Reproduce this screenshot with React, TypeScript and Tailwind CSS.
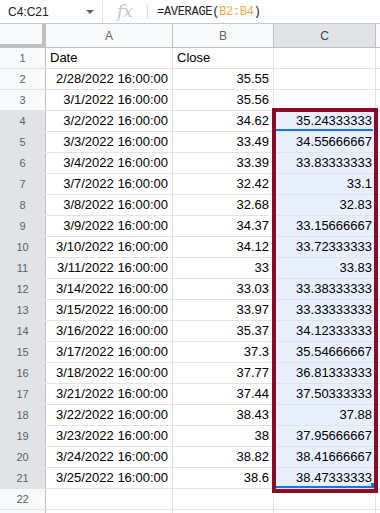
const rows: [string, string, string][] = [
  ['Date', 'Close', ''],
  ['2/28/2022 16:00:00', '35.55', ''],
  ['3/1/2022 16:00:00', '35.56', ''],
  ['3/2/2022 16:00:00', '34.62', '35.24333333'],
  ['3/3/2022 16:00:00', '33.49', '34.55666667'],
  ['3/4/2022 16:00:00', '33.39', '33.83333333'],
  ['3/7/2022 16:00:00', '32.42', '33.1'],
  ['3/8/2022 16:00:00', '32.68', '32.83'],
  ['3/9/2022 16:00:00', '34.37', '33.15666667'],
  ['3/10/2022 16:00:00', '34.12', '33.72333333'],
  ['3/11/2022 16:00:00', '33', '33.83'],
  ['3/14/2022 16:00:00', '33.03', '33.38333333'],
  ['3/15/2022 16:00:00', '33.97', '33.33333333'],
  ['3/16/2022 16:00:00', '35.37', '34.12333333'],
  ['3/17/2022 16:00:00', '37.3', '35.54666667'],
  ['3/18/2022 16:00:00', '37.77', '36.81333333'],
  ['3/21/2022 16:00:00', '37.44', '37.50333333'],
  ['3/22/2022 16:00:00', '38.43', '37.88'],
  ['3/23/2022 16:00:00', '38', '37.95666667'],
  ['3/24/2022 16:00:00', '38.82', '38.41666667'],
  ['3/25/2022 16:00:00', '38.6', '38.47333333'],
  ['', '', ''],
  ['', '', ''],
];

const COLS = 'grid grid-cols-[46px_127px_101px_102px_1fr]';

function isSelected(n: number) {
  return n >= 4 && n <= 21;
}

export default function App() {
  return (
    <div className="w-[380px] h-[513px] overflow-hidden bg-white font-['Liberation_Sans',Arial,sans-serif] text-[13px] text-black">
      {/* formula bar */}
      <div className="flex items-center h-[24px] border-b border-[#c7c7c7]">
        <div className="flex items-center w-[103px] h-full pl-[8px] pr-[8px] border-r border-[#e0e0e0]">
          <span className="flex-1 text-[12px] text-[#202124]">C4:C21</span>
          <span className="w-0 h-0 border-l-[4px] border-r-[4px] border-t-[4px] border-l-transparent border-r-transparent border-t-[#5f6368]" />
        </div>
        <div className="flex items-center justify-center w-[44px] h-full">
          <span className="font-['DejaVu_Serif',serif] italic text-[17px] text-[#c4c4c4] leading-none">fx</span>
        </div>
        <div className="w-px h-[16px] bg-[#dadce0]" />
        <div className="pl-[9px] text-[12px] tracking-[-0.3px] text-[#202124] font-['Liberation_Mono',monospace]">
          =AVERAGE(<span className="text-[#f6a83c]">B2:B4</span>)
        </div>
      </div>

      <div className="relative">
        {/* column headers */}
        <div className={`${COLS} h-[24px] border-b border-[#c0c0c0] bg-[#f8f9fa] text-[12px] text-[#5f6368]`}>
          <div className="border-r-[4px] border-b-[3px] border-[#c0c0c0] h-[23px]" />
          <div className="flex items-center justify-center border-r border-[#c0c0c0]">A</div>
          <div className="flex items-center justify-center border-r border-[#c0c0c0]">B</div>
          <div className="flex items-center justify-center border-r border-[#c0c0c0] bg-[#e1e3e7] text-[#444]">C</div>
          <div />
        </div>

        {rows.map((r, i) => {
          const n = i + 1;
          const sel = isSelected(n);
          return (
            <div key={n} className={`${COLS} h-[21px] border-b border-[#e2e3e3]`}>
              <div
                className={`flex items-center justify-center border-r border-[#c0c0c0] text-[11px] text-[#5f6368] ${
                  sel ? 'bg-[#e1e3e7]' : 'bg-[#f8f9fa]'
                }`}
              >
                {n <= 22 ? n : ''}
              </div>
              <div className={`flex items-center px-[4px] border-r border-[#e2e3e3] ${n === 1 ? 'justify-start' : 'justify-end'}`}>
                {r[0]}
              </div>
              <div className={`flex items-center px-[4px] border-r border-[#e2e3e3] ${n === 1 ? 'justify-start' : 'justify-end'}`}>
                {r[1]}
              </div>
              <div
                className={`flex items-center justify-end pr-[3px] border-r border-[#e2e3e3] ${
                  sel ? 'bg-[#e8f0fe]' : ''
                }`}
              >
                {r[2]}
              </div>
              <div />
            </div>
          );
        })}

        {/* active cell and range markers */}
        <div className="absolute left-[275px] top-[105px] w-[98px] h-[2px] bg-[#1a73e8]" />
        <div className="absolute left-[275px] top-[462px] w-[98px] h-[2px] bg-[#1a73e8]" />
        <div className="absolute left-[371px] top-[459px] w-[5px] h-[5px] bg-[#1a73e8]" />

        {/* annotation box */}
        <div className="absolute left-[272px] top-[84px] w-[106px] h-[385px] border-[4px] border-[#8b0a25] pointer-events-none" />
      </div>
    </div>
  );
}
